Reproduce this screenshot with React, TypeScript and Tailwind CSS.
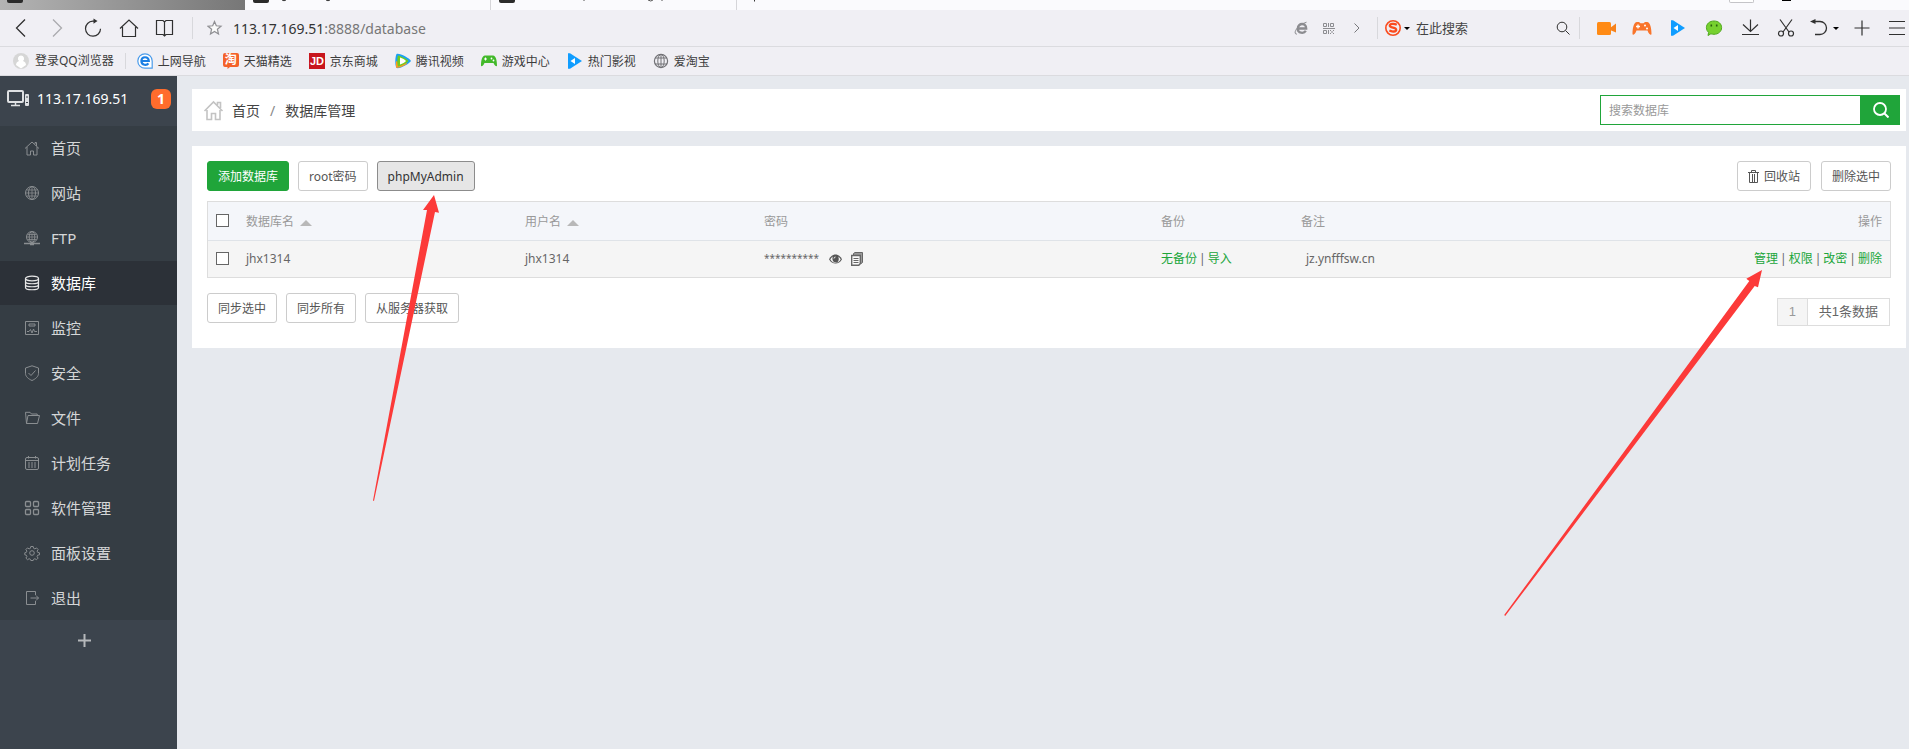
import React from 'react';
import clsx from 'clsx';

const Svg = ({ children, size = 16, className = '' }: { children: React.ReactNode; size?: number; className?: string }) => (
  <svg
    width={size}
    height={size}
    viewBox={`0 0 ${size} ${size}`}
    fill="none"
    stroke="currentColor"
    className={clsx('block shrink-0', className)}
    aria-hidden="true"
  >
    {children}
  </svg>
);

const IconButton = ({ label, children, className = 'w-9' }: { label: string; children: React.ReactNode; className?: string }) => (
  <button type="button" aria-label={label} className={clsx('flex h-9 shrink-0 items-center justify-center', className)}>
    {children}
  </button>
);

const Divider = ({ className = '' }: { className?: string }) => (
  <span className={clsx('w-px shrink-0 bg-[#d8d8dc]', className)}></span>
);

const PlayBlue = () => (
  <Svg>
    <path d="M1 .3h2L15 8 3 15.700H1Z" fill="#109dff" stroke="none" />
    <path d="M8 5 3.500 8 8 11Z" fill="#fff" stroke="none" />
  </Svg>
);

function TabStrip() {
  return (
    <div className="flex h-[10px] shrink-0 overflow-hidden bg-[#fafafd]">
      <div className="h-full w-[245px] bg-linear-to-r from-[#b4b4b4] to-[#777777] pl-[7px]">
        <div className="h-[3px] w-4 rounded-b-xs bg-[#2b2b2b]"></div>
      </div>
      <div className="flex h-full w-[246px] border-r border-[#d5d5d9] pl-2">
        <div className="h-[3px] w-4 rounded-b-xs bg-[#2b2b2b]"></div>
        <svg width="80" height="3" className="ml-3" aria-hidden="true">
          <path d="M1 0q2 1.500 4 0M45 0q2 1.500 4 0" stroke="#333" fill="none" />
        </svg>
      </div>
      <div className="flex h-full w-[246px] border-r border-[#d5d5d9] pl-2">
        <div className="h-[3px] w-4 rounded-b-xs bg-[#2b2b2b]"></div>
        <svg width="160" height="3" className="ml-3" aria-hidden="true">
          <path d="M57 0v1M121 0q3 2 5 0M135 0v1" stroke="#555" fill="none" />
        </svg>
      </div>
      <div className="flex-1">
        <svg width="40" height="3" className="ml-4" aria-hidden="true">
          <path d="M1.500 0v1.500" stroke="#333" />
        </svg>
      </div>
      <div className="h-[3px] w-[25px] rounded-b-xs border border-t-0 border-[#c4c4c8] bg-white"></div>
      <div className="mr-[118px] ml-7 h-px w-[9px] bg-black"></div>
    </div>
  );
}

function AddressBar() {
  return (
    <div className="flex h-[37px] shrink-0 items-center border-b border-[#dbdbdf] bg-[#f0eff4] pl-[3px] text-[#303030]">
      <IconButton label="后退">
        <Svg size={20}><path d="M14 1.500 5.500 10l8.500 8.500" strokeWidth="1.300" /></Svg>
      </IconButton>
      <IconButton label="前进">
        <Svg size={20} className="text-[#aaaaae]"><path d="m6 1.500 8.500 8.500L6 18.500" strokeWidth="1.300" /></Svg>
      </IconButton>
      <IconButton label="刷新">
        <Svg size={20}>
          <path d="M12 3.200H9.800a7.500 7.500 0 1 0 7.700 7.500" strokeWidth="1.200" />
          <path d="M10.500.5 14.500 3l-4 2.800Z" fill="currentColor" stroke="none" />
        </Svg>
      </IconButton>
      <IconButton label="主页">
        <Svg size={20}><path d="M1 10.500 10 2l9 8.500M3.500 9v9.500h13V9" strokeWidth="1.200" /></Svg>
      </IconButton>
      <IconButton label="阅读">
        <Svg size={20}><path d="M1.500 2.500H8L9.500 4 11 2.500h6.500v14H11L9.500 18 8 16.500H1.500ZM9.500 4v14" strokeWidth="1.200" /></Svg>
      </IconButton>
      <Divider className="ml-[9px] h-[22px]" />
      <button type="button" aria-label="收藏" className="ml-[14px]">
        <Svg className="text-[#8f8f93]">
          <path d="m7.500 1.500 1.800 4.300 4.700.4-3.600 3 1.100 4.700-4-2.500-4 2.500 1.100-4.700-3.600-3 4.700-.4Z" fill="#fafafa" strokeWidth="1.200" />
        </Svg>
      </button>
      <div className="ml-[10px] flex-1 pt-[2px] text-sm">
        <span className="text-[#333]">113.17.169.51</span>
        <span className="text-[#777]">:8888/database</span>
      </div>
      <IconButton label="兼容模式" className="w-7">
        <Svg size={14} className="text-[#8c8c90]">
          <path d="M3.800 7.500h8.400C12.200 1.500 4 1.500 3.800 7.500c-.2 5 6.200 5.500 8 2.300" strokeWidth="2.300" />
          <path d="M3 13C-1 14 1 5 12.500 1.200" />
        </Svg>
      </IconButton>
      <IconButton label="二维码" className="w-7">
        <Svg size={12} className="text-[#8c8c90]">
          <path d="M.5 1.500h3v3h-3ZM7.500 1.500h3v3h-3ZM.5 8.500h3v3h-3ZM5.500 1v4M0 6.500h12M5.500 8v4M7.500 8v1M10.500 8v1M9 9v2M7.500 11v1M10.500 11v1" />
        </Svg>
      </IconButton>
      <IconButton label="更多" className="w-7">
        <Svg size={12} className="text-[#77777b]"><path d="M3.500 1.500 8 6l-4.500 4.500" /></Svg>
      </IconButton>
      <Divider className="ml-[6px] h-[22px]" />
      <button type="button" aria-label="搜索引擎" className="ml-[7px] flex items-center gap-[3px]">
        <Svg className="text-[#fb4b1e]">
          <circle cx="8" cy="8" r="7.200" strokeWidth="1.600" />
          <path d="M11.800 4.700C9 3.200 4.800 3.600 4.800 5.700c0 2.400 6.400 1.600 6.400 4 0 2.200-4.200 2.300-6.900.9" strokeWidth="2.300" />
        </Svg>
        <Svg size={6} className="text-black"><path d="M0 2h6L3 5Z" fill="currentColor" stroke="none" /></Svg>
      </button>
      <input
        aria-label="在此搜索"
        placeholder="在此搜索"
        className="ml-[6px] h-7 w-[140px] bg-transparent text-[13px] outline-none placeholder:text-[#444]"
      />
      <button type="button" aria-label="搜索">
        <Svg size={14}><path d="m9.500 9.500 4 4" /><circle cx="6" cy="6" r="4.800" /></Svg>
      </button>
      <Divider className="ml-[9px] h-[22px]" />
      <IconButton label="录制" className="ml-2 w-9">
        <Svg size={20}>
          <rect x="1" y="4" width="14" height="13" rx="1.500" fill="#ff8a14" stroke="none" />
          <path d="m14 10 6-4.500v9L14 12Z" fill="#f7821b" stroke="none" />
        </Svg>
      </IconButton>
      <IconButton label="游戏">
        <Svg size={20}>
          <path d="M.5 16C.5 11 1.500 4 5 4h2l1.500 1.200h3L13 4h2c3.500 0 4.500 7 4.500 12 0 1.500-2.500 1-4-3.500h-11C3 17 .5 17.500.5 16Z" fill="#f9742a" stroke="none" />
          <path d="M6 6.500v4M4 8.500h4" stroke="#fff" strokeWidth="1.300" />
          <circle cx="13" cy="7.500" r="1" fill="#fff" stroke="none" />
          <circle cx="15" cy="10.500" r="1" fill="#fff" stroke="none" />
        </Svg>
      </IconButton>
      <IconButton label="影视"><PlayBlue /></IconButton>
      <IconButton label="微信">
        <Svg size={18}>
          <path d="M9 2c4.400 0 7.600 2.800 7.600 6.600S13.400 15.300 9 15.300c-1.200 0-2.200-.2-3.100-.5L3 16.500l.6-3A6.600 6.600 0 0 1 1.400 8.600C1.400 4.800 4.600 2 9 2Z" fill="#77d12f" stroke="#4fa81c" />
          <path d="M6.300 5.500v2M11.700 5.500v2" stroke="#28600c" strokeWidth="1.600" />
        </Svg>
      </IconButton>
      <IconButton label="下载">
        <Svg size={20}><path d="M10.500 1.500v12M3 6.500l7.500 7 7.500-7M2 16.500h17" strokeWidth="1.200" /></Svg>
      </IconButton>
      <IconButton label="截图">
        <Svg size={20}>
          <path d="m4 1.500 9 12.500M16 1.500 7 14" strokeWidth="1.200" />
          <circle cx="5" cy="15.500" r="2.500" strokeWidth="1.200" />
          <circle cx="15" cy="15.500" r="2.500" strokeWidth="1.200" />
        </Svg>
      </IconButton>
      <IconButton label="撤销" className="w-10 gap-[5px]">
        <Svg size={18}>
          <path d="M4 2.500h6a6.500 6.500 0 0 1 0 13H5" strokeWidth="1.300" />
          <path d="M0 2.500 5.500 0v5Z" fill="currentColor" stroke="none" />
        </Svg>
        <Svg size={6} className="text-black"><path d="M0 2h6L3 5Z" fill="currentColor" stroke="none" /></Svg>
      </IconButton>
      <IconButton label="新建">
        <Svg size={16}><path d="M8 .5v15M.5 8h15" strokeWidth="1.200" /></Svg>
      </IconButton>
      <IconButton label="菜单" className="w-[29px] justify-end pr-1">
        <Svg size={16}><path d="M0 1.500h16M0 8h16M0 14.500h16" strokeWidth="1.200" /></Svg>
      </IconButton>
    </div>
  );
}

const bookmarks = [
  {
    name: '上网导航',
    icon: (
      <Svg>
        <path d="M8 .8a7.200 7.200 0 1 0 0 14.400h7.200V8A7.200 7.200 0 0 0 8 .8Z" fill="#fff" stroke="#4a9bea" strokeWidth="1.200" />
        <path d="M4.500 8h7.300C11.500 3 4.500 3 4.400 8c0 4.500 5.500 4.700 7 2.300" stroke="#1b7fe4" strokeWidth="2.200" />
      </Svg>
    )
  },
  {
    name: '天猫精选',
    icon: (
      <span className="relative block size-4">
        <Svg>
          <path d="M2 0h12a2 2 0 0 1 2 2v10a2 2 0 0 1-2 2H7l-2.500 2V14H2a2 2 0 0 1-2-2V2a2 2 0 0 1 2-2Z" fill="#f4622a" stroke="none" />
        </Svg>
        <span className="absolute inset-x-0 top-0 text-center text-xs leading-[14px] font-bold text-white">淘</span>
      </span>
    )
  },
  {
    name: '京东商城',
    icon: (
      <Svg>
        <rect width="16" height="16" fill="#c8161e" stroke="none" />
        <text x="1" y="12" fontSize="11" fontWeight="700" fontFamily="Liberation Sans, sans-serif" fill="#fff" stroke="none">JD</text>
      </Svg>
    )
  },
  {
    name: '腾讯视频',
    icon: (
      <Svg>
        <path d="M1.500 1C5 0 14 5 16 8c-2 3-11 8-14.500 7C-.2 12 0 4 1.500 1Z" fill="#1ba0f2" stroke="none" />
        <path d="M1.500 8C1 8 .5 13 1.500 15c4 0 8-2.500 11-4.500L3 9Z" fill="#ff9a1f" stroke="none" />
        <path d="M3 2.500C6 3 12 6 13.500 8 12 10 6 13 3 13.500 2 11 2 5 3 2.500Z" fill="#6fcb1e" stroke="none" />
        <path d="M5 4.500c2.500.8 5 2.300 6 3.500-1 1.200-3.500 2.700-6 3.500Z" fill="#fff" stroke="none" />
      </Svg>
    )
  },
  {
    name: '游戏中心',
    icon: (
      <Svg>
        <path d="M0 12.500C0 8 1 2.500 4 2.500h8c3 0 4 5.500 4 10 0 1.500-2 1-3.500-2.500h-9C2 13.500 0 14 0 12.500Z" fill="#43b92b" stroke="none" />
        <path d="M4.500 4.500v3M3 6h3" stroke="#fff" />
        <circle cx="10.500" cy="5.500" r=".9" fill="#fff" stroke="none" />
        <circle cx="12.500" cy="7.500" r=".9" fill="#fff" stroke="none" />
      </Svg>
    )
  },
  { name: '热门影视', icon: <PlayBlue /> },
  {
    name: '爱淘宝',
    icon: (
      <Svg className="text-[#727276]">
        <circle cx="8" cy="8" r="6.600" strokeWidth="1.200" />
        <ellipse cx="8" cy="8" rx="3.200" ry="6.600" />
        <path d="M8 1.500v13M2 5h12M2 11h12" />
      </Svg>
    )
  }
];

function BookmarkBar() {
  return (
    <div className="flex h-[29px] shrink-0 items-center border-b border-[#dbdbdf] bg-[#f0eff4] pl-[13px] text-xs text-[#3c3c3c]">
      <a href="#login" className="flex items-center gap-[6px]">
        <Svg>
          <circle cx="8" cy="8" r="8" fill="#d6d6d6" stroke="none" />
          <path d="M8 2.500a3.200 3.200 0 0 1 2 5.600c2 .8 3 2 3 4L8 15.500l-5-3.400c0-2 1-3.200 3-4a3.200 3.200 0 0 1 2-5.600Z" fill="#fff" stroke="none" />
        </Svg>
        登录QQ浏览器
      </a>
      <Divider className="mx-[11px] h-4" />
      <div className="flex items-center gap-[17px]">
        {bookmarks.map((item) => (
          <a key={item.name} href="#bookmark" className="flex items-center gap-[5px]">
            {item.icon}
            <span className="pt-px">{item.name}</span>
          </a>
        ))}
      </div>
    </div>
  );
}

const menu = [
  { name: '首页', icon: <path d="M1 8.500 8 2l7 6.500M3 7v8h3.500v-4h3v4H13V7M11 4V2.500h1.500V6" /> },
  {
    name: '网站',
    icon: (
      <>
        <circle cx="8" cy="8" r="6.500" />
        <ellipse cx="8" cy="8" rx="3.500" ry="6.500" />
        <path d="M8 1.500v13M1.500 8h13M2.500 5h11M2.500 11h11" strokeWidth=".8" />
      </>
    )
  },
  {
    name: 'FTP',
    icon: (
      <>
        <circle cx="8" cy="7" r="5.500" />
        <ellipse cx="8" cy="7" rx="2.800" ry="5.500" />
        <path d="M8 1.500v11M2.500 7h11M3.500 4.500h9M3.500 9.500h9" strokeWidth=".8" />
        <path d="M0 13.500h16M6 14.500h4" strokeWidth="1.500" />
      </>
    )
  },
  {
    name: '数据库',
    active: true,
    icon: (
      <g strokeWidth="1.200">
        <ellipse cx="8" cy="3.500" rx="6.500" ry="2.300" />
        <path d="M1.500 3.500v9c0 3 13 3 13 0v-9M1.500 6.500c0 3 13 3 13 0M1.500 9.500c0 3 13 3 13 0" />
      </g>
    )
  },
  { name: '监控', icon: <path d="M1.500 1.500h13v13h-13ZM5 4h6v2H5ZM3 11.500h2l1.500-2 1.500 3.500 1.500-4 1 2.500H13" /> },
  { name: '安全', icon: <path d="M8 .8 14.500 3v5.500c0 3-3 5.500-6.500 7-3.500-1.500-6.500-4-6.500-7V3ZM4.500 8 7 10.500l4.500-5" /> },
  { name: '文件', icon: <path d="M2.500 13.500h11l2-8H4ZM2.500 13.500l-1-11.200H6L7.500 4h5.700v1.500" /> },
  {
    name: '计划任务',
    icon: (
      <>
        <rect x="1.500" y="2.500" width="13" height="12" rx="1.500" />
        <path d="M1.500 5.500h13M4.500 1v2.500M11.500 1v2.500" />
        <path d="M4 8h8M4 10h8M4 12h8" strokeDasharray="2 1" />
      </>
    )
  },
  {
    name: '软件管理',
    icon: (
      <g strokeWidth="1.300">
        <rect x="1.500" y="1.500" width="5" height="5" rx="1" />
        <rect x="9.500" y="1.500" width="5" height="5" rx="1" />
        <rect x="1.500" y="9.500" width="5" height="5" rx="1" />
        <rect x="9.500" y="9.500" width="5" height="5" rx="1" />
      </g>
    )
  },
  {
    name: '面板设置',
    icon: (
      <>
        <circle cx="8" cy="8" r="2.300" />
        <path d="M6.800 1.500h2.400l.4 1.800 1.300.6 1.600-1 1.600 1.600-1 1.600.6 1.300 1.800.4v2l-1.800.4-.6 1.300 1 1.600-1.600 1.600-1.600-1-1.300.6-.4 1.200H6.800l-.4-1.200-1.300-.6-1.600 1-1.600-1.600 1-1.600-.6-1.300L.8 9.800v-2l1.500-.4.6-1.300-1-1.600 1.600-1.600 1.600 1 1.300-.6Z" />
      </>
    )
  },
  { name: '退出', icon: <path d="M11.500 5V1.500h-9v13h9V11M6.500 8h8M12 5.500 14.500 8 12 10.500" /> }
];

function Sidebar() {
  return (
    <aside className="w-[177px] shrink-0 bg-[#3c444d]">
      <div className="flex h-[50px] items-center pr-[6px] pb-[5px] pl-[7px]">
        <svg width="22" height="17" viewBox="0 0 22 17" fill="none" stroke="#dfe1e3" aria-hidden="true">
          <rect x="1" y="1" width="15" height="11" rx="1" strokeWidth="2" />
          <path d="M8.500 12v3M4 15.500h9" strokeWidth="1.500" />
          <rect x="18" y="4" width="4" height="12" rx="1" fill="#dfe1e3" stroke="none" />
          <path d="M19 7h2M19 12.500h2" stroke="#3c444d" />
        </svg>
        <span className="ml-2 text-sm text-white">113.17.169.51</span>
        <span className="ml-auto flex size-5 items-center justify-center rounded-md bg-[#ff6c2c] text-sm font-bold text-white">1</span>
      </div>
      <nav className="flex flex-col gap-px bg-[#353d44] text-[15px] text-[#d5d7d8]">
        {menu.map((item) => (
          <a
            key={item.name}
            href="#menu"
            className={clsx('flex h-11 items-center gap-[11px] pl-6', item.active && 'bg-[#2c3138] text-white')}
          >
            <Svg className={item.active ? 'text-[#e6e6e6]' : 'text-[#8a8e91]'}>{item.icon}</Svg>
            {item.name}
          </a>
        ))}
      </nav>
      <button type="button" aria-label="添加菜单" className="flex h-10 w-full items-center justify-center pr-2">
        <Svg size={13} className="text-[#b5b8bb]"><path d="M6.500 0v13M0 6.500h13" strokeWidth="2" /></Svg>
      </button>
    </aside>
  );
}

const Button = ({ children, className = 'border-[#ccc] bg-white text-[#555]' }: { children: React.ReactNode; className?: string }) => (
  <button type="button" className={clsx('flex h-[30px] items-center gap-[5px] rounded-[3px] border px-[10px] pt-px text-xs', className)}>
    {children}
  </button>
);

const Checkbox = ({ label }: { label: string }) => (
  <input type="checkbox" aria-label={label} className="block size-[13px] appearance-none border border-[#666] bg-white" />
);

const SortArrow = () => (
  <svg width="12" height="6" viewBox="0 0 12 6" className="ml-[6px] inline-block align-middle" aria-hidden="true">
    <path d="M0 6 6 0l6 6Z" fill="#b8b8b8" />
  </svg>
);

const Links = ({ names }: { names: string[] }) => (
  <>
    {names.map((name, idx) => (
      <React.Fragment key={name}>
        {idx > 0 && <span className="mx-[2px]">|</span>}
        <a href="#action" className="text-[#20a53a]">{name}</a>
      </React.Fragment>
    ))}
  </>
);

function DatabaseTable() {
  return (
    <div className="mt-[10px] border border-[#ddd]">
      <table className="w-full table-fixed border-collapse text-left text-xs text-[#666]">
        <thead>
          <tr className="h-[38px] border-b border-[#dfe3e8] bg-[#f4f6fa] text-[#999] [&>th]:px-2 [&>th]:font-normal [&>th+th]:pt-[3px]">
            <th className="w-[30px]"><Checkbox label="全选" /></th>
            <th className="w-[279px]">数据库名<SortArrow /></th>
            <th className="w-[239px]">用户名<SortArrow /></th>
            <th className="w-[397px]">密码</th>
            <th className="w-[140px]">备份</th>
            <th>备注</th>
            <th className="text-right">操作</th>
          </tr>
        </thead>
        <tbody>
          <tr className="h-[37px] bg-[#f5f5f5] [&>td]:px-2">
            <td><Checkbox label="jhx1314" /></td>
            <td>jhx1314</td>
            <td>jhx1314</td>
            <td>
              <div className="flex items-center">
                <span className="text-[10px]">**********</span>
                <button type="button" aria-label="显示密码" className="ml-[10px]">
                  <svg width="13" height="12" viewBox="0 0 13 12" className="block" aria-hidden="true">
                    <path d="M0 6.200C3-.2 10-.2 13 6.200 10 12 3 12 0 6.200Z" fill="#555" />
                    <path d="M1.300 6.500C2 5 3 4 3.800 3.500 3 6 3.500 9 6.500 9.500s4-3 2.700-6C10.500 4.300 11.300 5.500 11.700 6.500 9 11 4 11 1.300 6.500Z" fill="#f5f5f5" />
                    <path d="M5 5.500Q5 4 6.500 4" stroke="#f5f5f5" fill="none" />
                  </svg>
                </button>
                <button type="button" aria-label="复制密码" className="ml-[9px]">
                  <svg width="12" height="14" viewBox="0 0 12 14" fill="none" stroke="#666" className="block" aria-hidden="true">
                    <path d="M2.500 3.500v-2L4 .5h7.500v10l-2 1.500" fill="#999" />
                    <path d="M.7 3.500h8.600v8l-1.500 1.800H.7Z" fill="#fafafa" strokeWidth="1.400" />
                    <path d="M2.500 6.500h5M2.500 8.500h5M2.500 10.500h5" />
                  </svg>
                </button>
              </div>
            </td>
            <td><Links names={['无备份', '导入']} /></td>
            <td><span className="ml-[5px]">jz.ynfffsw.cn</span></td>
            <td className="text-right"><Links names={['管理', '权限', '改密', '删除']} /></td>
          </tr>
        </tbody>
      </table>
    </div>
  );
}

function Main() {
  return (
    <main className="flex min-w-0 flex-1 flex-col gap-[15px] bg-[#e6e9ee] pt-[13px] pr-[3px] pl-[15px]">
      <div className="flex h-[42px] items-center bg-white pr-[6px] pl-[11px] text-sm text-[#444]">
        <Svg size={21} className="text-[#c3c3c3]">
          <path d="M1.500 11 10.500 2l9 9M4 10v9.500h4.500v-6h4v6H17V10M14.500 5V2.500h3V8" strokeWidth="1.600" />
        </Svg>
        <a href="#home" className="ml-2 pt-px">首页</a>
        <span className="mx-[10px] pt-px text-[#888]">/</span>
        <span className="pt-px">数据库管理</span>
        <form className="ml-auto flex h-[30px] w-[300px]">
          <input
            aria-label="搜索数据库"
            placeholder="搜索数据库"
            className="min-w-0 flex-1 border border-[#20a53a] bg-white px-2 pt-[2px] text-xs outline-none placeholder:text-[#999]"
          />
          <button type="button" aria-label="搜索" className="flex w-[39px] items-center justify-center bg-[#20a53a] text-white">
            <Svg><circle cx="7" cy="7" r="6" strokeWidth="1.800" /><path d="m11.500 11.500 4 4" strokeWidth="2" /></Svg>
          </button>
        </form>
      </div>

      <section className="bg-white px-[15px] pt-[15px] pb-[22px]">
        <div className="flex items-center gap-[9px]">
          <Button className="border-[#20a53a] bg-[#20a53a] text-white">添加数据库</Button>
          <Button>root密码</Button>
          <Button className="border-[#8c8c8c] bg-[#e6e6e6] text-[#333]">phpMyAdmin</Button>
          <div className="ml-auto flex gap-[10px]">
            <Button>
              <svg width="11" height="13" viewBox="0 0 11 13" fill="none" stroke="#555" aria-hidden="true">
                <path d="M0 2.500h11M3.500 2V.5h4V2M1.500 3v9.500h8V3M4.500 4v8M6.500 4v8" />
              </svg>
              回收站
            </Button>
            <Button>删除选中</Button>
          </div>
        </div>
        <DatabaseTable />
        <div className="mt-[15px] flex items-start gap-[9px]">
          <Button>同步选中</Button>
          <Button>同步所有</Button>
          <Button>从服务器获取</Button>
          <div className="mt-[5px] mr-px ml-auto flex h-7 items-center border border-[#ddd] [font-family:'Liberation_Sans','Noto_Sans_CJK_SC',sans-serif] text-[13px]">
            <span className="flex h-full w-[30px] items-center justify-center border-r border-[#ddd] bg-[#f5f5f5] text-[#999]">1</span>
            <span className="px-[11px] text-[#666]">共1条数据</span>
          </div>
        </div>
      </section>
    </main>
  );
}

// Red pointers drawn over the page
const Arrows = () => (
  <svg width="1909" height="749" viewBox="0 0 1909 749" fill="#fc3a39" className="pointer-events-none absolute top-0 left-0" aria-hidden="true">
    <path d="M434 195 439 212.700 435 212 374 501 373 500.500 427 210 423 210Z" />
    <path d="M1762 270 1758 287.300 1754.700 286 1505.200 616 1504.200 615 1749.300 281 1746.300 278.700Z" />
  </svg>
);

export default function App() {
  return (
    <div className="relative flex min-h-screen flex-col overflow-hidden [font-family:'Noto_Sans','Noto_Sans_CJK_SC',sans-serif]">
      <TabStrip />
      <AddressBar />
      <BookmarkBar />
      <div className="flex flex-1">
        <Sidebar />
        <Main />
      </div>
      <Arrows />
    </div>
  );
}
